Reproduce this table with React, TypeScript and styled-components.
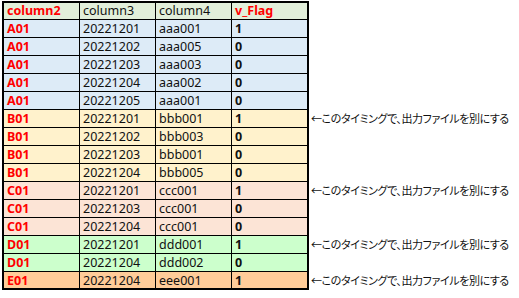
import React from 'react'
import styled, { createGlobalStyle } from 'styled-components'

const GlobalStyle = createGlobalStyle`
  html, body {
    margin: 0;
    padding: 0;
    background: #ffffff;
  }
  body {
    padding: 2px 0 0 2px;
    font-family: "Noto Sans", "Noto Sans CJK JP", sans-serif;
  }
`

type Group = 'A' | 'B' | 'C' | 'D' | 'E'

const groupColor: Record<Group | 'H', string> = {
  H: '#e2efda',
  A: '#ddebf7',
  B: '#fff2cc',
  C: '#fce4d6',
  D: '#ccffcc',
  E: '#ffcc99',
}

const rows: { key: string; group: Group; date: string; code: string; flag: string; note?: boolean }[] = [
  { key: 'A01', group: 'A', date: '20221201', code: 'aaa001', flag: '1' },
  { key: 'A01', group: 'A', date: '20221202', code: 'aaa005', flag: '0' },
  { key: 'A01', group: 'A', date: '20221203', code: 'aaa003', flag: '0' },
  { key: 'A01', group: 'A', date: '20221204', code: 'aaa002', flag: '0' },
  { key: 'A01', group: 'A', date: '20221205', code: 'aaa001', flag: '0' },
  { key: 'B01', group: 'B', date: '20221201', code: 'bbb001', flag: '1', note: true },
  { key: 'B01', group: 'B', date: '20221202', code: 'bbb003', flag: '0' },
  { key: 'B01', group: 'B', date: '20221203', code: 'bbb001', flag: '0' },
  { key: 'B01', group: 'B', date: '20221204', code: 'bbb005', flag: '0' },
  { key: 'C01', group: 'C', date: '20221201', code: 'ccc001', flag: '1', note: true },
  { key: 'C01', group: 'C', date: '20221203', code: 'ccc001', flag: '0' },
  { key: 'C01', group: 'C', date: '20221204', code: 'ccc001', flag: '0' },
  { key: 'D01', group: 'D', date: '20221201', code: 'ddd001', flag: '1', note: true },
  { key: 'D01', group: 'D', date: '20221204', code: 'ddd002', flag: '0' },
  { key: 'E01', group: 'E', date: '20221204', code: 'eee001', flag: '1', note: true },
]

const NOTE = '←このタイミングで、出力ファイルを別にする'

const App: React.FC = () => {
  return (
    <>
      <GlobalStyle />
      <Sheet>
        <Row>
          <Cell $bg={groupColor.H} $first $top $bold $red>column2</Cell>
          <Cell $bg={groupColor.H} $top>column3</Cell>
          <Cell $bg={groupColor.H} $top>column4</Cell>
          <Cell $bg={groupColor.H} $top $last $bold $red>v_Flag</Cell>
          <Note />
        </Row>
        {rows.map((r, i) => (
          <Row key={i}>
            <Cell $bg={groupColor[r.group]} $first $bottom={i === rows.length - 1} $bold $red>{r.key}</Cell>
            <Cell $bg={groupColor[r.group]} $bottom={i === rows.length - 1}>{r.date}</Cell>
            <Cell $bg={groupColor[r.group]} $bottom={i === rows.length - 1}>{r.code}</Cell>
            <Cell $bg={groupColor[r.group]} $last $bottom={i === rows.length - 1} $bold>{r.flag}</Cell>
            <Note>{r.note ? NOTE : ''}</Note>
          </Row>
        ))}
      </Sheet>
    </>
  )
}

export default App

const Sheet = styled.div`
  display: flex;
  flex-direction: column;
  width: 517px;
`

const Row = styled.div`
  display: grid;
  grid-template-columns: 78px 76px 76px 77px 1fr;
  height: 18px;
`

const Cell = styled.div<{ $bg: string; $first?: boolean; $last?: boolean; $top?: boolean; $bottom?: boolean; $bold?: boolean; $red?: boolean }>`
  box-sizing: border-box;
  height: ${({ $top }) => ($top ? '19px' : '18px')};
  margin-top: ${({ $top }) => ($top ? '-1px' : '0')};
  background: ${({ $bg }) => $bg};
  border-right: ${({ $last }) => ($last ? '2px' : '1px')} solid #000;
  border-bottom: ${({ $bottom }) => ($bottom ? '2px' : '1px')} solid #000;
  border-left: ${({ $first }) => ($first ? '2px solid #000' : 'none')};
  border-top: ${({ $top }) => ($top ? '2px solid #000' : 'none')};
  padding-left: 3px;
  font-size: 12.5px;
  line-height: ${({ $top }) => ($top ? '15px' : '17px')};
  font-weight: ${({ $bold }) => ($bold ? 700 : 400)};
  color: ${({ $red }) => ($red ? '#ff0000' : '#111111')};
  white-space: nowrap;
  overflow: hidden;
`

const Note = styled.div`
  padding-left: 2px;
  font-family: "Noto Sans CJK JP", sans-serif;
  font-size: 11px;
  line-height: 17px;
  letter-spacing: -0.4px;
  font-feature-settings: "palt";
  color: #111111;
  white-space: nowrap;
`
